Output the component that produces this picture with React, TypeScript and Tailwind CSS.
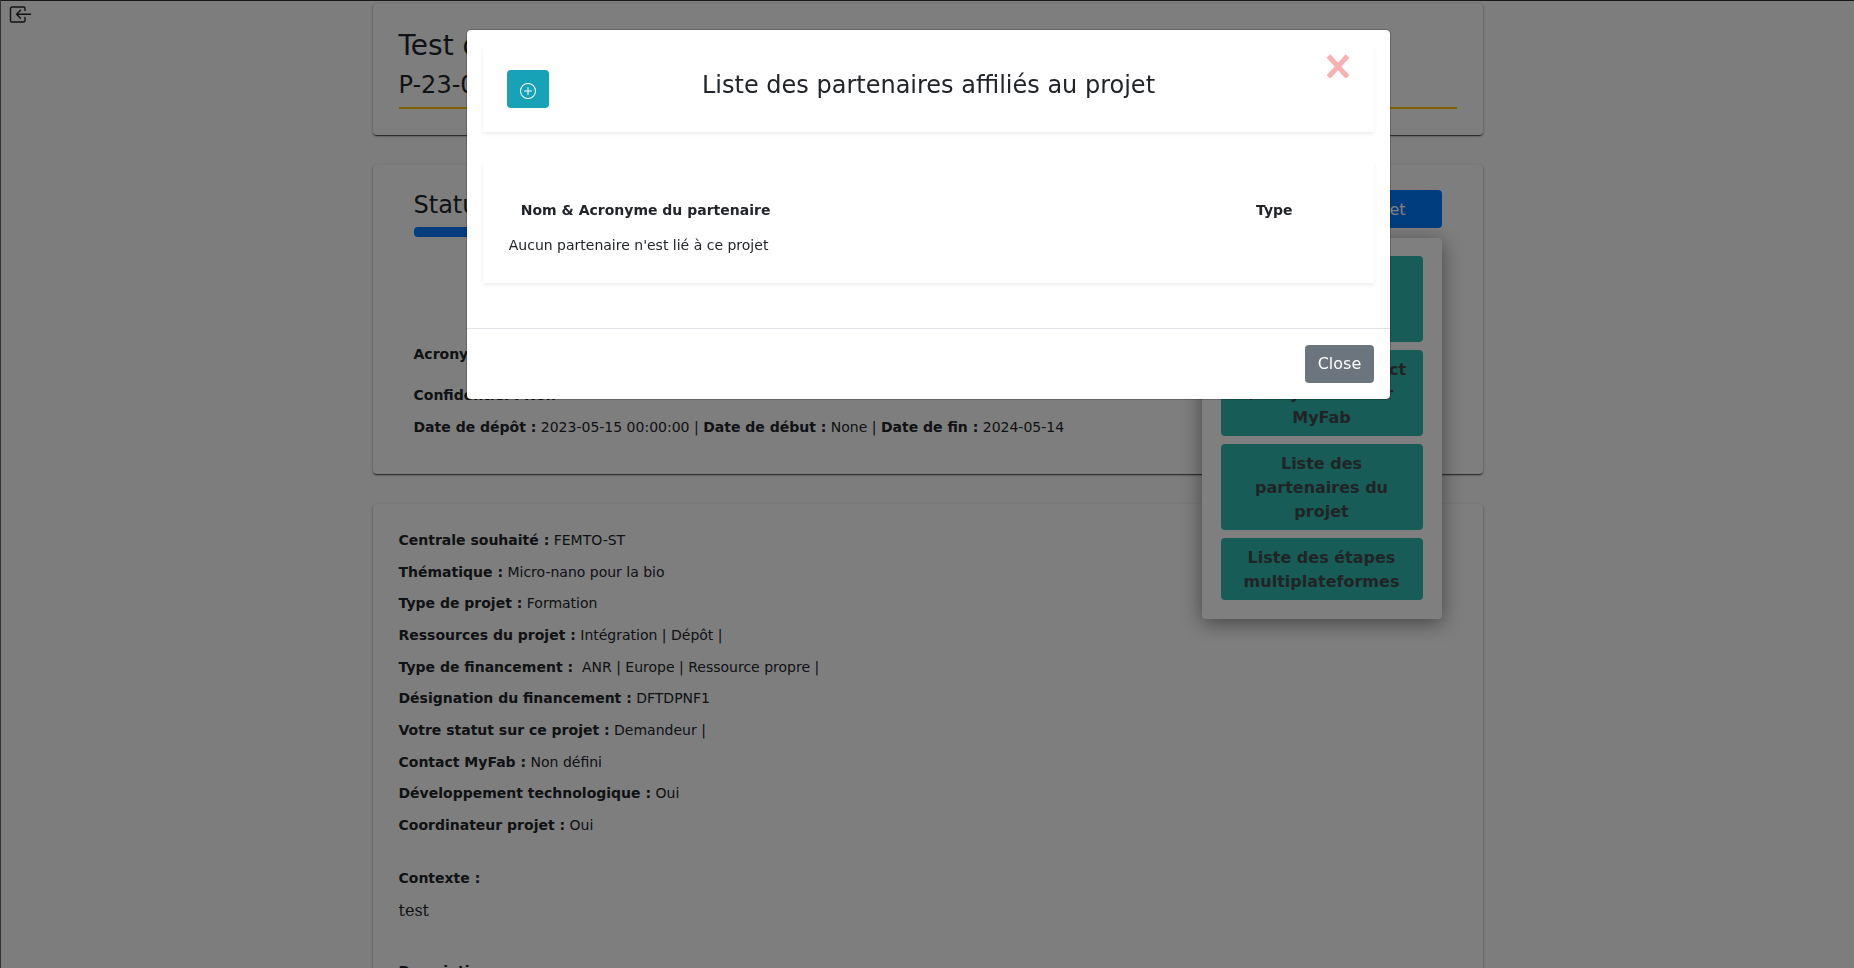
import type { ReactNode } from "react";

const CARD =
  "rounded bg-[#fcfcfc] shadow-[0_2px_1px_-1px_rgba(0,0,0,0.4),0_1px_1px_0_rgba(0,0,0,0.3),0_1px_3px_0_rgba(0,0,0,0.3)]";

const details: { label: string; value: string }[] = [
  { label: "Centrale souhaité :", value: "FEMTO-ST" },
  { label: "Thématique :", value: "Micro-nano pour la bio" },
  { label: "Type de projet :", value: "Formation" },
  { label: "Ressources du projet :", value: "Intégration | Dépôt |" },
  { label: "Type de financement :", value: "\u00a0ANR | Europe | Ressource propre |" },
  { label: "Désignation du financement :", value: "DFTDPNF1" },
  { label: "Votre statut sur ce projet :", value: "Demandeur |" },
  { label: "Contact MyFab :", value: "Non défini" },
  { label: "Développement technologique :", value: "Oui" },
  { label: "Coordinateur projet :", value: "Oui" },
];

const actions = [
  "Liste des documents du projet",
  "Modifier le contact / Project Leader MyFab",
  "Liste des partenaires du projet",
  "Liste des étapes multiplateformes",
];

function Field({ label, children }: { label: string; children: ReactNode }) {
  return (
    <>
      <b>{label}</b> {children}
    </>
  );
}

function ExitIcon() {
  return (
    <svg className="size-6" viewBox="0 0 24 24" fill="none" stroke="#212529" strokeWidth="1.4" strokeLinecap="round" strokeLinejoin="round">
      <path d="M17 7.500V5.500a1.500 1.500 0 0 0-1.500-1.500h-11.500a1.500 1.500 0 0 0-1.500 1.500v12a1.500 1.500 0 0 0 1.500 1.500h11.500a1.500 1.500 0 0 0 1.500-1.500V14.500" />
      <path d="M22.500 11.300H8.500M12.500 7.300l-4 4 4 4" />
    </svg>
  );
}

function PlusCircleIcon() {
  return (
    <svg className="size-4" viewBox="0 0 16 16" fill="currentColor">
      <path d="M8 15A7 7 0 1 1 8 1a7 7 0 0 1 0 14m0 1A8 8 0 1 0 8 0a8 8 0 0 0 0 16" />
      <path d="M8 4a.5.5 0 0 1 .5.5v3h3a.5.5 0 0 1 0 1h-3v3a.5.5 0 0 1-1 0v-3h-3a.5.5 0 0 1 0-1h3v-3A.5.5 0 0 1 8 4" />
    </svg>
  );
}

function ProjectPage() {
  return (
    <div className="relative min-h-screen border-t border-l border-[#333] bg-[#fafafa]">
      <a href="#retour" aria-label="Retour" className="absolute top-[2px] left-[7px]">
        <ExitIcon />
      </a>
      <main className="mx-auto max-w-[1110px] pt-[3px]">
        <header className={`${CARD} px-[26px] pt-[25px] pb-[26px]`}>
          <h1 className="text-[28px] leading-[34px]">Test de projet</h1>
          <p className="mt-2 border-b-2 border-[#ffc107] pb-[7px] text-[24px] leading-[29px]">P-23-00001</p>
        </header>

        <section className={`${CARD} relative mt-[30px] px-[41px] pt-[25px] pb-9`}>
          <div className="flex justify-between">
            <div className="w-1/2">
              <h2 className="pt-[1px] text-[24px] leading-[29px]">Statut du projet</h2>
              <div className="mt-[7px] h-[10px] rounded bg-[#007bff]" />
            </div>
            <button className="h-[38px] rounded bg-[#007bff] px-9 pt-px text-[16px] text-white">Gestion du projet</button>
          </div>
          <div className="mt-[106px] leading-[22px]">
            <p>
              <Field label="Acronyme :">TEST</Field>
            </p>
            <p className="mt-[19px] font-bold">Confidentiel : Non</p>
            <p className="mt-[10px]">
              <Field label="Date de dépôt :">2023-05-15 00:00:00</Field> | <Field label="Date de début :">None</Field> |{" "}
              <Field label="Date de fin :">2024-05-14</Field>
            </p>
          </div>
          <nav className="absolute top-[73px] right-[41px] flex w-[240px] flex-col gap-2 rounded bg-white px-[19px] pt-[18px] pb-[19px] shadow-[0_4px_20px_0_rgba(0,0,0,0.45)]">
            {actions.map((action) => (
              <button key={action} className="rounded bg-[#2fb9ac] px-[15px] pt-2 pb-[6px] text-[16px] leading-6 font-bold text-[#42484c]">
                {action}
              </button>
            ))}
          </nav>
        </section>

        <section className={`${CARD} mt-[30px] px-[26px] pt-[25px] pb-9 leading-[22px]`}>
          <ul className="flex min-h-[307px] flex-col justify-between">
            {details.map(({ label, value }) => (
              <li key={label}>
                <Field label={label}>{value}</Field>
              </li>
            ))}
          </ul>
          <h3 className="mt-[31px] font-bold">Contexte :</h3>
          <p className="mt-[11px] font-['DejaVu_Serif',serif] text-[16px]">test</p>
          <h3 className="mt-[38px] font-bold">Description :</h3>
          <p className="mt-[11px] font-['DejaVu_Serif',serif] text-[16px]">test</p>
        </section>
      </main>
    </div>
  );
}

function PartnersDialog() {
  const panel = "shadow-[0_2px_4px_0_rgba(0,0,0,0.075)]";
  return (
    <div
      role="dialog"
      aria-modal="true"
      aria-labelledby="partners-title"
      className="fixed inset-0 z-20 overflow-hidden border-l border-[#333] bg-black/50 pl-[2px]"
    >
      <div className="mx-auto mt-[29px] w-1/2 rounded-[5px] border border-black/20 bg-white bg-clip-padding">
        <div className="flex flex-col gap-[30px] p-4 pb-[45px]">
          <div className={`${panel} relative flex items-start px-6 py-6`}>
            <button aria-label="Ajouter un partenaire" className="flex h-[38px] w-[42px] items-center justify-center rounded bg-[#17a2b8] pt-1 text-white">
              <PlusCircleIcon />
            </button>
            <h2 id="partners-title" className="flex-1 pt-px pr-[42px] text-center text-[24px] leading-[29px]">
              Liste des partenaires affiliés au projet
            </h2>
            <button aria-label="Fermer" className="absolute top-2 right-6 text-[#fbb0b0]">
              <svg className="size-6" viewBox="0 0 24 24" fill="none" stroke="currentColor" strokeWidth="5">
                <path d="M2.500 2l19 21M21.500 2l-19 21" />
              </svg>
            </button>
          </div>
          <div className={`${panel} px-6 pt-[33px] pb-[27px] leading-[22px]`}>
            <table className="w-full">
              <thead>
                <tr>
                  <th className="w-[82%] px-[14px] py-1 text-left">Nom &amp; Acronyme du partenaire</th>
                  <th className="px-[14px] py-1">Type</th>
                </tr>
              </thead>
              <tbody>
                <tr>
                  <td colSpan={2} className="px-[2px] pt-[9px]">
                    Aucun partenaire n'est lié à ce projet
                  </td>
                </tr>
              </tbody>
            </table>
          </div>
        </div>
        <div className="flex justify-end border-t border-[#dee2e6] p-4">
          <button className="h-[38px] rounded bg-[#6c757d] px-[13px] text-[16px] text-white">Close</button>
        </div>
      </div>
    </div>
  );
}

export default function App() {
  return (
    <div className="h-screen overflow-hidden font-['DejaVu_Sans',sans-serif] text-[14px] text-[#212529]">
      <ProjectPage />
      <PartnersDialog />
    </div>
  );
}
